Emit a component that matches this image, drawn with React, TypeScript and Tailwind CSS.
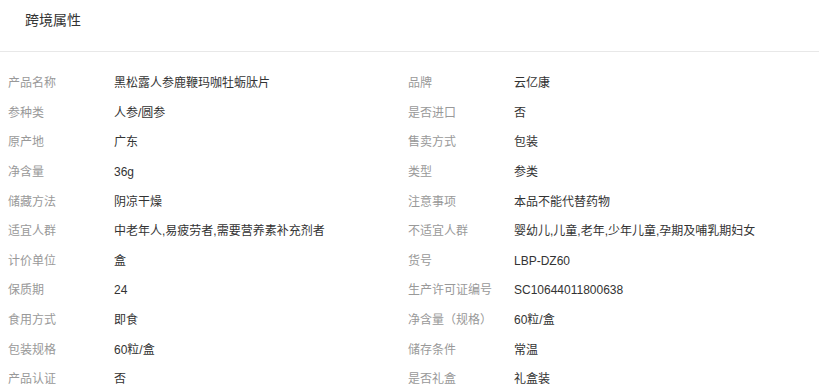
const attrs: [string, string][] = [
  ["产品名称", "黑松露人参鹿鞭玛咖牡蛎肽片"],
  ["品牌", "云亿康"],
  ["参种类", "人参/圆参"],
  ["是否进口", "否"],
  ["原产地", "广东"],
  ["售卖方式", "包装"],
  ["净含量", "36g"],
  ["类型", "参类"],
  ["储藏方法", "阴凉干燥"],
  ["注意事项", "本品不能代替药物"],
  ["适宜人群", "中老年人,易疲劳者,需要营养素补充剂者"],
  ["不适宜人群", "婴幼儿,儿童,老年,少年儿童,孕期及哺乳期妇女"],
  ["计价单位", "盒"],
  ["货号", "LBP-DZ60"],
  ["保质期", "24"],
  ["生产许可证编号", "SC10644011800638"],
  ["食用方式", "即食"],
  ["净含量（规格）", "60粒/盒"],
  ["包装规格", "60粒/盒"],
  ["储存条件", "常温"],
  ["产品认证", "否"],
  ["是否礼盒", "礼盒装"],
];

export default function App() {
  return (
    <div className="w-[819px] h-[392px] overflow-hidden bg-white font-['Liberation_Sans','Noto_Sans_CJK_SC',sans-serif]">
      <div className="h-[52px] border-b border-[#e8e8e8] pl-[25px] pt-[10px]">
        <h3 className="text-[14px] leading-[21px] text-[#333]">跨境属性</h3>
      </div>
      <div className="grid grid-cols-[400px_400px] pt-[16.5px] pl-[8px]">
        {attrs.map(([label, value]) => (
          <div key={label + value} className="flex h-[29.6px] items-center text-[12px]">
            <span className="w-[106px] shrink-0 text-[#999]">{label}</span>
            <span className="text-[#333]">{value}</span>
          </div>
        ))}
      </div>
    </div>
  );
}
